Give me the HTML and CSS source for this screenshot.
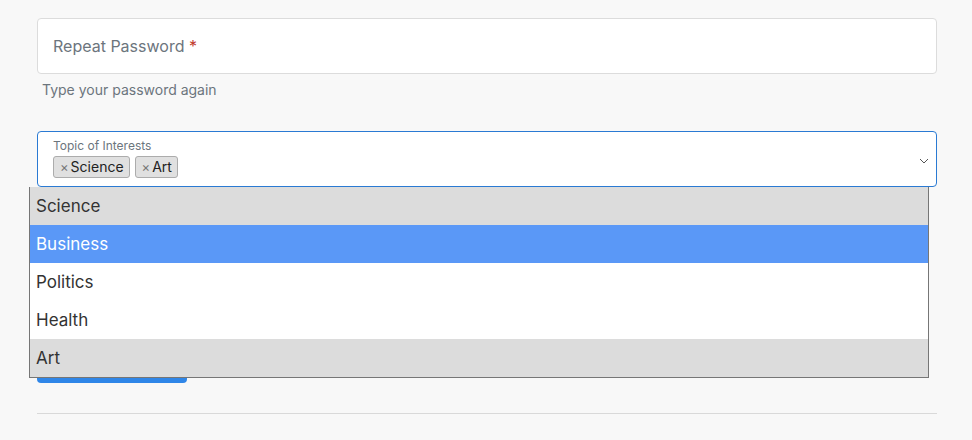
FILE: index.html
```html
<!DOCTYPE html>
<html lang="en">
<head>
  <meta charset="UTF-8">
  <meta name="viewport" content="width=device-width, initial-scale=1.0">
  <title>Register</title>
  <link rel="stylesheet" href="styles.css">
</head>
<body>
  <form class="form">
    <div class="field">
      <span class="field-label">Repeat Password <span class="req">*</span></span>
    </div>
    <div class="help">Type your password again</div>

    <div class="select-wrap">
      <div class="select">
        <span class="select-label">Topic of Interests</span>
        <div class="chips">
          <span class="chip"><span class="chip-x">×</span>Science</span>
          <span class="chip"><span class="chip-x">×</span>Art</span>
        </div>
        <svg class="chevron" width="10" height="6" viewBox="0 0 10 6">
          <polyline points="1,1 5,5 9,1" fill="none" stroke="#555" stroke-width="1"/>
        </svg>
      </div>
      <ul class="listbox">
        <li class="option selected">Science</li>
        <li class="option active">Business</li>
        <li class="option">Politics</li>
        <li class="option">Health</li>
        <li class="option selected">Art</li>
      </ul>
    </div>

    <button type="button" class="button">Register</button>
    <hr class="rule">
  </form>
</body>
</html>
```

FILE: styles.css
```css
body { margin: 0; background: #f8f8f8; font-family: Inter, "Liberation Sans", sans-serif; color: #333; }
.form { width: 900px; padding: 18px 0 0 37px; }
.field { height: 54px; background: #fff; border: 1px solid #dcdcdc; border-radius: 4px; display: flex; align-items: center; padding: 0 15px; }
.field-label { font-size: 16px; color: #6c757d; }
.req { color: #c0392b; }
.help { font-size: 14px; color: #6c757d; margin: 7px 0 0 5px; }
.select-wrap { position: relative; margin-top: 33px; }
.select { height: 54px; background: #fff; border: 1px solid #2a7ad3; border-radius: 4px; padding: 0 15px; display: flex; flex-direction: column; position: relative; }
.select-label { font-size: 12px; color: #6c757d; margin-top: 6px; line-height: 15px; }
.chips { display: flex; gap: 5px; margin-top: 3px; }
.chip { font-size: 14px; line-height: 20px; background: #e0e0e0; border: 1px solid #acacac; border-radius: 3px; padding: 0 5px 0 6px; color: #222; }
.chip-x { color: #777; font-size: 13px; margin-right: 2px; }
.chevron { position: absolute; right: 7px; top: 26px; }
.listbox { position: absolute; top: 56px; left: -8px; width: 898px; margin: 0; padding: 0; list-style: none; border: 1px solid #767676; border-top: none; background: #fff; z-index: 2; }
.option { height: 38px; line-height: 38px; padding-left: 6px; font-size: 17px; color: #333; }
.option.selected { background: #dcdcdc; }
.option.active { background: #5a98f7; color: #fff; }
.button { display: block; margin-top: 158px; width: 150px; height: 38px; background: #2f86e8; color: #fff; border: none; border-radius: 4px; font-family: inherit; font-size: 16px; }
.rule { margin: 30px 0 0; border: none; border-top: 1px solid #d9d9d9; width: 900px; }
```
